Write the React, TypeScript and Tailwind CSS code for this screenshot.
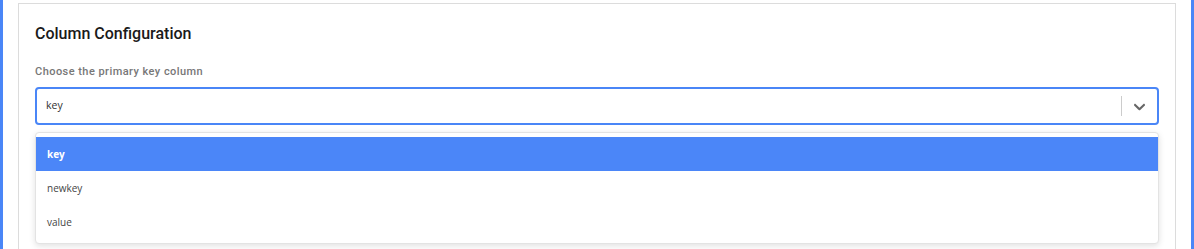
import { FC } from 'react'

const options = ['key', 'newkey', 'value']

const App: FC = () => {
  const selected = 'key'

  return (
    <div className="w-[1194px] h-[249px] overflow-hidden bg-white border-x-[3px] border-[#4a86f7] px-[15px] pt-[3px] font-['Roboto',sans-serif]">
      <div className="border border-[#dcdcdc] bg-white px-4 pt-[20px] h-[400px]">
        <h2 className="text-[16px] leading-5 font-medium text-[#1a1a1a]">Column Configuration</h2>

        <label className="block mt-[20px] text-[11px] leading-4 font-medium tracking-[0.45px] text-[#777]">
          Choose the primary key column
        </label>

        {/* Select control */}
        <div className="mt-[7px] h-[38px] flex items-center rounded-[4px] border-2 border-[#4a86f7] bg-white">
          <div className="flex-1 pl-[9px] text-[10.5px] text-[#333] font-['Open_Sans',sans-serif]">{selected}</div>
          <div className="flex items-center">
            <span className="w-px h-[20px] bg-[#cccccc]" />
            <div className="w-[35px] flex justify-center text-[#666]">
              <svg width="19" height="19" viewBox="0 0 20 20" fill="currentColor">
                <path d="M4.516 7.548c0.436-0.446 1.043-0.481 1.576 0l3.908 3.747 3.908-3.747c0.533-0.481 1.141-0.446 1.574 0 0.436 0.445 0.408 1.197 0 1.615-0.406 0.418-4.695 4.502-4.695 4.502-0.217 0.223-0.502 0.335-0.787 0.335s-0.57-0.112-0.789-0.335c0 0-4.287-4.084-4.695-4.502s-0.436-1.17 0-1.615z" />
              </svg>
            </div>
          </div>
        </div>

        {/* Menu */}
        <div className="mt-[7px] rounded-[4px] border border-[#e3e3e3] bg-white pt-[4px] pb-1 shadow-[0_2px_6px_rgba(0,0,0,0.12)]">
          {options.map((o) => (
            <div
              key={o}
              className={`h-[34px] flex items-center pl-[11px] text-[10px] font-['Open_Sans',sans-serif] ${
                o === selected ? 'bg-[#4b86f8] text-white font-bold' : 'text-[#444]'
              }`}
            >
              {o}
            </div>
          ))}
        </div>
      </div>
    </div>
  )
}

export default App
